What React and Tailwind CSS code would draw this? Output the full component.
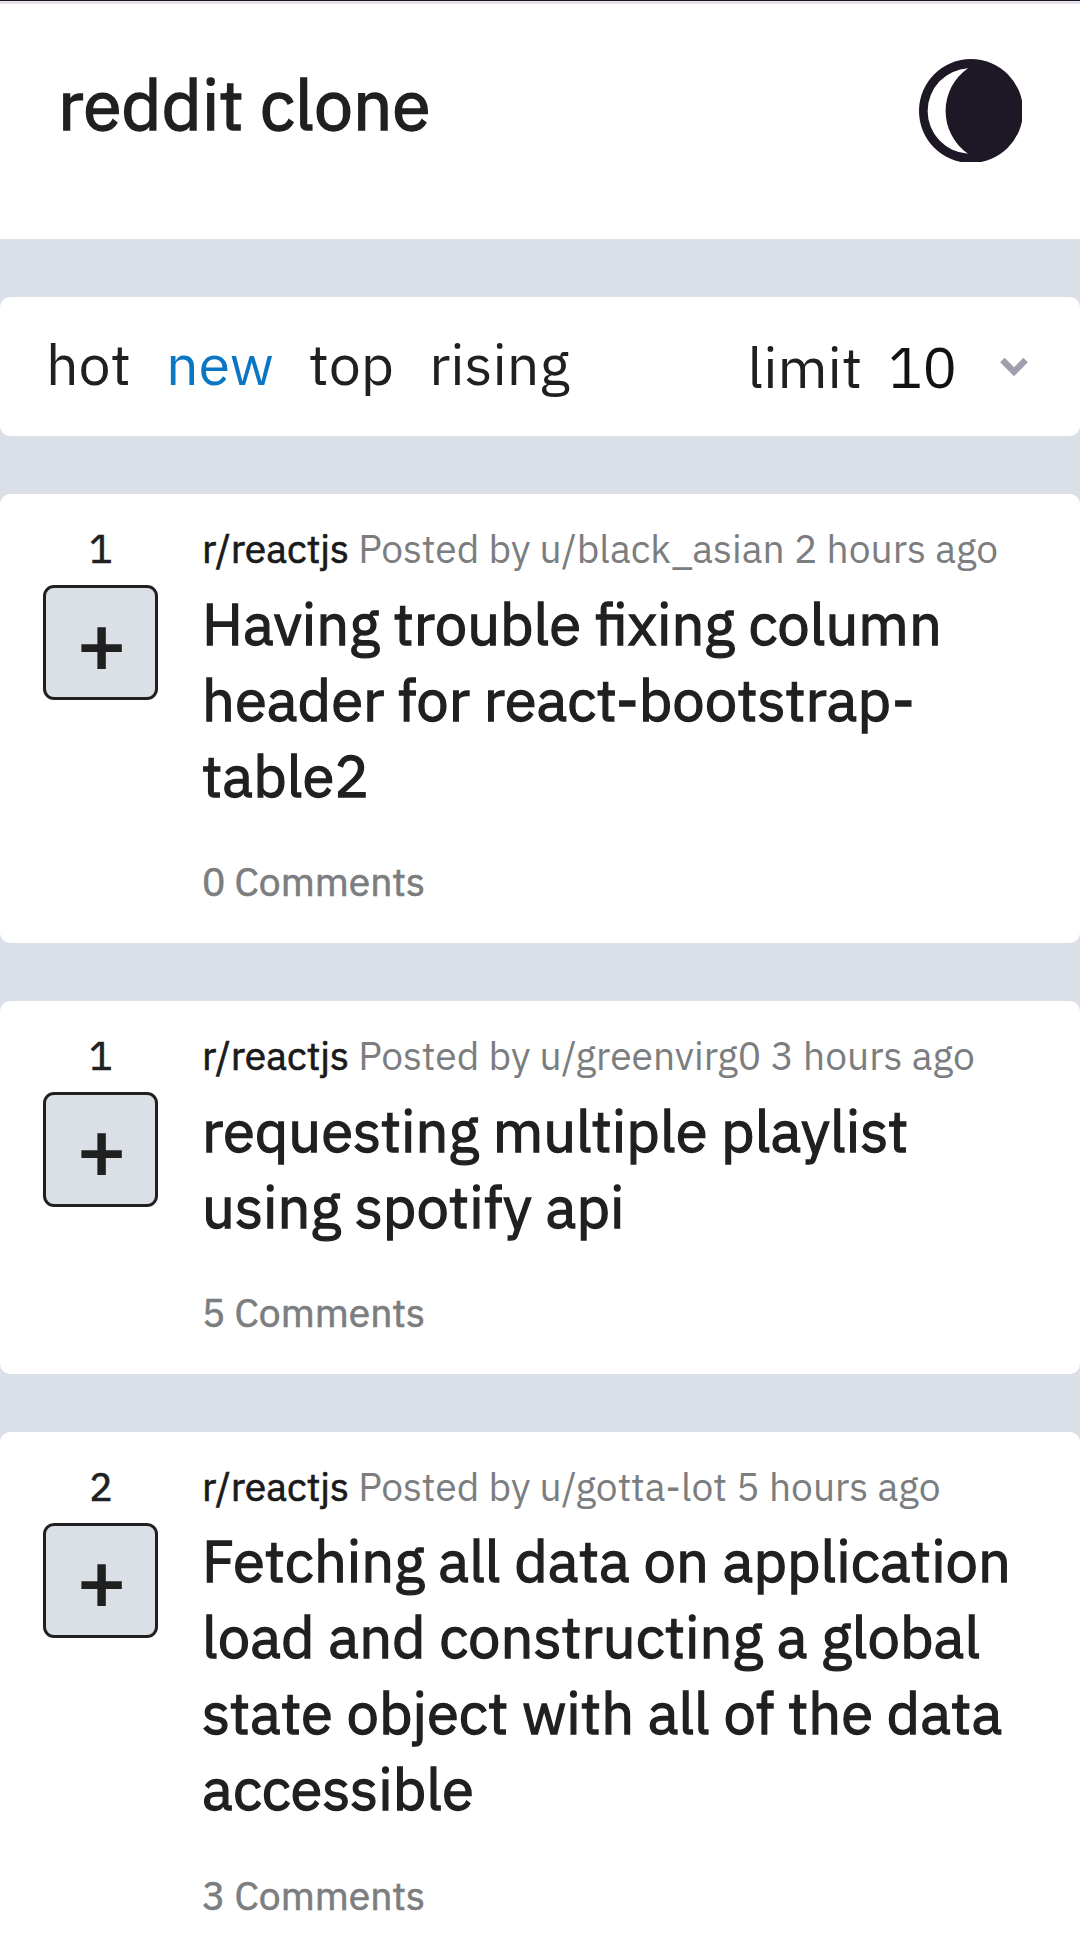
const posts = [
  { score: 1, sub: "r/reactjs", author: "black_asian", age: "2 hours ago", title: "Having trouble fixing column header for react-bootstrap-table2", comments: 0 },
  { score: 1, sub: "r/reactjs", author: "greenvirg0", age: "3 hours ago", title: "requesting multiple playlist using spotify api", comments: 5 },
  { score: 2, sub: "r/reactjs", author: "gotta-lot", age: "5 hours ago", title: "Fetching all data on application load and constructing a global state object with all of the data accessible", comments: 3 },
];

const sorts = ["hot", "new", "top", "rising"];

function MoonIcon() {
  return (
    <svg width="103" height="103" viewBox="0 0 103 103" className="block">
      <circle cx="52" cy="52" r="52" fill="#1d1726" />
      <path d="M49 9.2A42.82 42.82 0 0 0 49 94.7A52 52 0 0 1 49 9.2Z" fill="#fff" />
    </svg>
  );
}

function Header() {
  return (
    <header className="flex h-[235px] items-start justify-between bg-white pt-[55px] pr-[58px] pl-[58px]">
      <h1 className="mt-[0.6px] text-[69.5px] leading-[88px] [-webkit-text-stroke:1.6px]">reddit clone</h1>
      <button aria-label="Toggle theme">
        <MoonIcon />
      </button>
    </header>
  );
}

function SortBar() {
  return (
    <div className="mt-[58px] flex h-[139px] items-center justify-between rounded-[10px] bg-white pr-[52px] pl-[46px] text-[57.4px] leading-[74px]">
      <nav className="flex gap-[35px] pb-[6px]">
        {sorts.map((s) => (
          <a key={s} className={s === "new" ? "text-[#0a76c4]" : ""}>{s}</a>
        ))}
      </nav>
      <div className="flex items-center">
        <span>limit</span>
        <span className="ml-[26px] text-[#111]">10</span>
        <svg width="28" height="19" viewBox="0 0 28 19" className="ml-[43px]">
          <path d="M2.4 3.1L14 14.7L25.6 3.1" fill="none" stroke="#a09fad" strokeWidth="6.4" />
        </svg>
      </div>
    </div>
  );
}

function Post({ post }) {
  return (
    <article className="mt-[58px] flex gap-[44px] rounded-[10px] bg-white pt-[29px] pr-[43px] pb-[35.9px] pl-[43px]">
      <div className="flex w-[115px] shrink-0 flex-col items-center">
        <span className="pl-px text-[39px] leading-[51px] [-webkit-text-stroke:0.7px]">{post.score}</span>
        <button className="mt-[11px] flex h-[115px] w-[115px] items-center justify-center rounded-[11px] border-3 border-[#202020] bg-[#dbdfe6] pl-[2px] text-[82px] leading-none [-webkit-text-stroke:2.2px]">
          +
        </button>
      </div>
      <div className="min-w-0 flex-1">
        <p className="text-[39px] leading-[51px] whitespace-nowrap text-[#7b7d7f]">
          <span className="text-[#1a1a1a] [-webkit-text-stroke:0.7px]">{post.sub}</span>{" "}
          Posted by u/{post.author} {post.age}
        </p>
        <h2 className="mt-[11.7px] text-[57.9px] leading-[76px] [-webkit-text-stroke:1.3px]">{post.title}</h2>
        <p className="mt-[42.3px] text-[39px] leading-[51px] text-[#7b7d7f] [-webkit-text-stroke:0.7px]">{post.comments} Comments</p>
      </div>
    </article>
  );
}

export default function App() {
  return (
    <div className="h-[1941px] overflow-hidden bg-[#dbdfe7] font-['IBM_Plex_Sans','Open_Sans',sans-serif] text-[#202020]">
      <div className="h-px bg-[#1d1726]" />
      <div className="h-[3px] bg-[#e6e0ea]" />
      <Header />
      <SortBar />
      {posts.map((p) => (
        <Post key={p.author} post={p} />
      ))}
    </div>
  );
}
